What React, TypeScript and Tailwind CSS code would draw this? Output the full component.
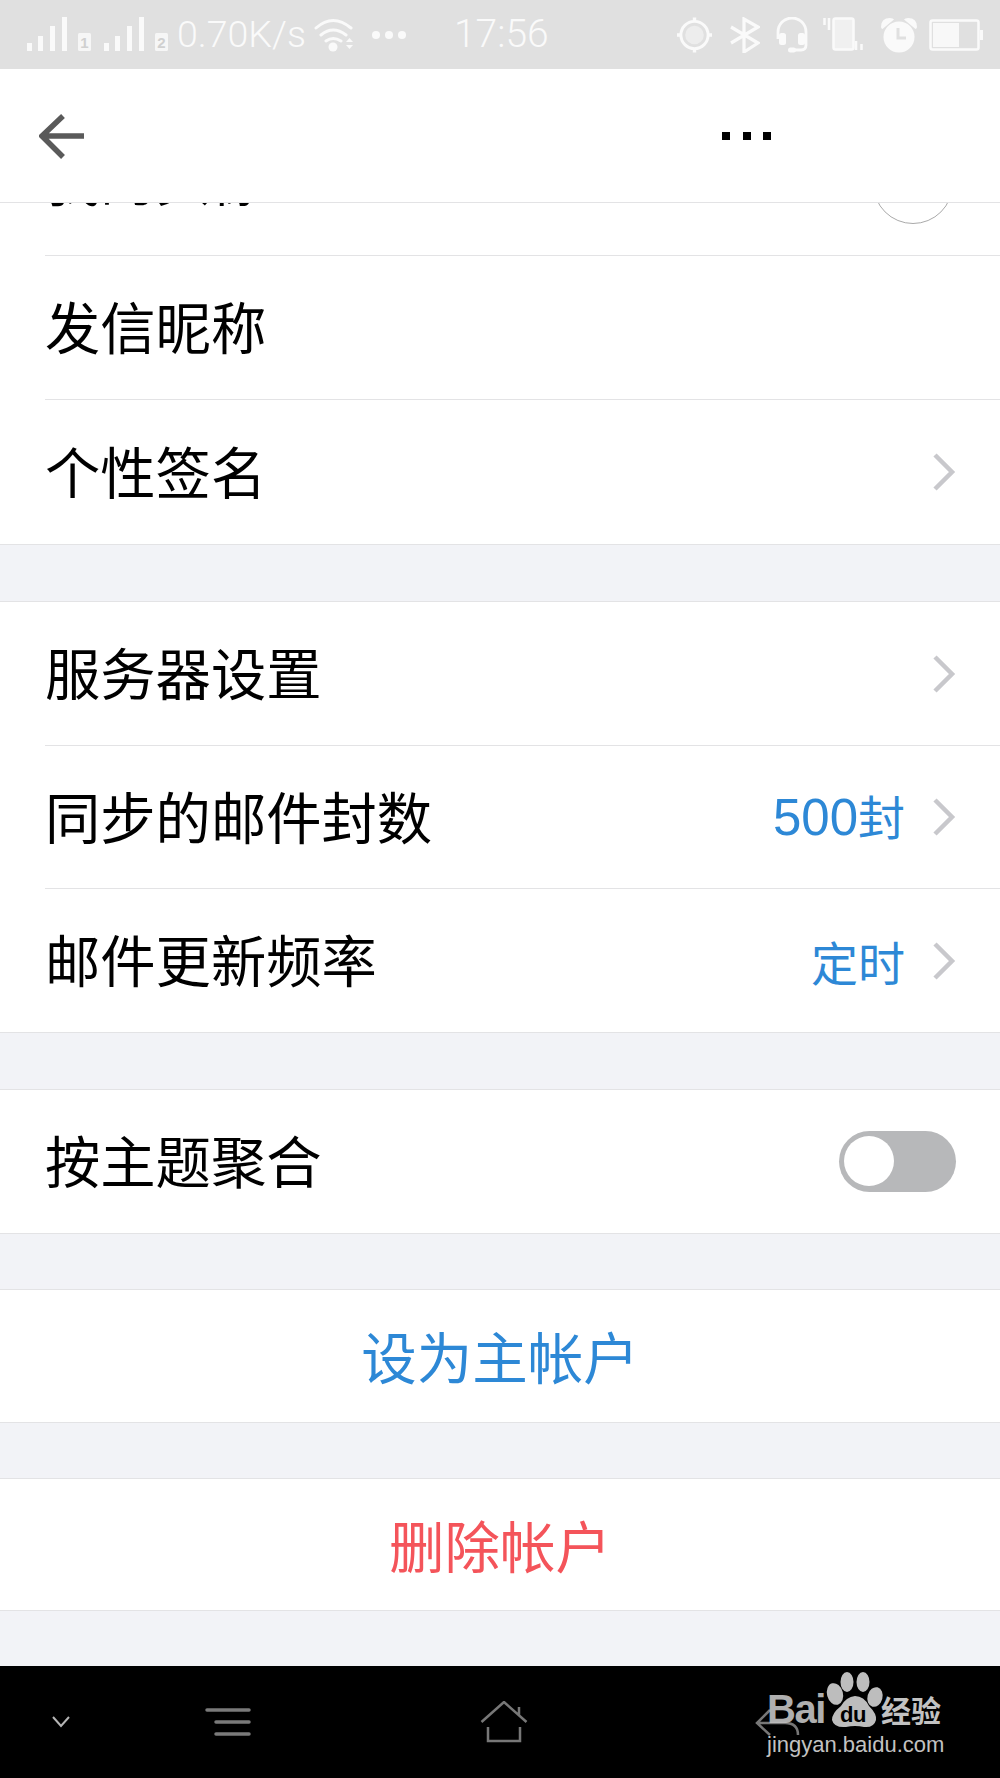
import React from "react";

const font = "font-['Noto_Sans_CJK_SC',sans-serif]";

function Chevron() {
  return (
    <svg width="24" height="38" viewBox="0 0 24 38" className="shrink-0">
      <path d="M3 2 L20 19 L3 36" fill="none" stroke="#c8c8cc" strokeWidth="4.5" />
    </svg>
  );
}

function Row({ label, value, digits, chevron, line, height }: { label: string; value?: string; digits?: string; chevron?: boolean; line?: boolean; height: string }) {
  return (
    <div className="pl-[45px] bg-white">
      <div className={`flex items-center pr-[44px] ${height} ${line ? "border-b border-[#e3e3e5]" : ""}`}>
        <span className="text-[55.3px] text-black leading-none flex-1 whitespace-nowrap pb-[3px]">{label}</span>
        {(value || digits) && (
          <span className="text-[47px] text-[#2d88d6] leading-none mr-[27px] whitespace-nowrap">
            {digits && <span className="text-[51px] font-['Liberation_Sans',sans-serif]">{digits}</span>}
            {value}
          </span>
        )}
        {chevron && <Chevron />}
      </div>
    </div>
  );
}

function ActionRow({ label, color, height }: { label: string; color: string; height: string }) {
  return (
    <div className={`border-y border-[#e3e3e5] bg-white flex items-center justify-center ${height}`}>
      <span className={`text-[55.5px] leading-none ${color}`}>{label}</span>
    </div>
  );
}

function Signal({ sim }: { sim: string }) {
  return (
    <svg width="66" height="36" viewBox="0 0 66 36" fill="#fafafa" className="shrink-0">
      <rect x="1" y="26" width="5" height="8" />
      <rect x="12" y="19" width="5" height="15" />
      <rect x="24" y="9" width="5" height="25" />
      <rect x="36" y="0" width="5" height="34" />
      <rect x="52" y="16" width="13" height="18" rx="1.5" fill="#f6f6f6" />
      <text x="58.500" y="31" textAnchor="middle" fontSize="15" fontWeight="700" fontFamily="Liberation Sans, sans-serif" fill="#d0d0d0">{sim}</text>
    </svg>
  );
}

function StatusIcons() {
  return (
    <div className="flex items-center ml-auto">
      <svg width="35" height="36" viewBox="0 0 36 36" fill="none" className="shrink-0">
        <circle cx="18" cy="18" r="14" stroke="#fafafa" strokeWidth="3" />
        <circle cx="18" cy="18" r="9.500" fill="#ededed" />
        <path d="M18 0v4M18 32v4M0 18h4M32 18h4" stroke="#fafafa" strokeWidth="3.500" />
      </svg>
      <svg width="30" height="36" viewBox="0 0 30 36" fill="none" className="ml-[18px] shrink-0">
        <path d="M1 10 L28 26 L14 35 V2 L28 10 L1 26" stroke="#fafafa" strokeWidth="3.200" />
      </svg>
      <svg width="32" height="36" viewBox="0 0 32 36" fill="none" className="ml-[16px] shrink-0">
        <path d="M2 22 V15 a14 14 0 0 1 28 0 V28 q0 5 -5 5 H14" stroke="#fafafa" strokeWidth="2.800" />
        <rect x="3" y="16" width="7" height="12" rx="2.500" fill="#fafafa" />
        <rect x="22" y="16" width="7" height="12" rx="2.500" fill="#fafafa" />
        <rect x="12" y="30.500" width="8" height="5" rx="2.500" fill="#fafafa" />
      </svg>
      <svg width="40" height="36" viewBox="0 0 40 36" fill="none" className="ml-[15px] shrink-0">
        <path d="M1.500 1v7M6 1v12" stroke="#fafafa" strokeWidth="2.500" />
        <rect x="10.500" y="1.500" width="20" height="31" rx="2" fill="#f0f0f0" stroke="#fafafa" strokeWidth="2.500" />
        <path d="M33 24v9M38.500 27v6" stroke="#fafafa" strokeWidth="2.500" />
      </svg>
      <svg width="38" height="36" viewBox="0 0 38 36" fill="none" className="ml-[17px] shrink-0">
        <circle cx="19" cy="20" r="15.500" fill="#fafafa" />
        <path d="M1 10 Q1 1 10 1 Q13 1 14 2.500 L2.500 12 Q1 11.500 1 10 Z M37 10 Q37 1 28 1 Q25 1 24 2.500 L35.500 12 Q37 11.500 37 10 Z" fill="#fafafa" />
        <path d="M18 11v10h8" stroke="#e0e0e0" strokeWidth="3" />
      </svg>
      <svg width="54" height="32" viewBox="0 0 54 32" fill="none" className="ml-[11px] shrink-0">
        <rect x="1.500" y="1.500" width="48" height="29" rx="2" stroke="#fafafa" strokeWidth="2.500" />
        <rect x="4" y="4" width="26" height="24" fill="#f8f8f8" />
        <rect x="51" y="11" width="3" height="10" fill="#fafafa" />
      </svg>
    </div>
  );
}

export default function App() {
  return (
    <div className={`relative w-[1000px] h-[1778px] overflow-hidden flex flex-col bg-[#f2f3f7] ${font}`}>
      {/* status bar */}
      <div className="h-[69px] shrink-0 bg-[#e0e0e0] flex items-center pl-[26px] pr-[17px] text-[#fafafa] font-['Roboto',sans-serif] font-light">
        <Signal sim="1" />
        <div className="w-[11px]" />
        <Signal sim="2" />
        <span className="text-[37.5px] leading-none ml-[8px] whitespace-nowrap">0.70K/s</span>
        <svg width="42" height="36" viewBox="0 0 42 36" fill="none" className="ml-[8px] shrink-0">
          <path d="M2 11 Q19 -4 37 11 M7 18 Q19 8 32 18 M12 24 Q19 19 27 24" stroke="#fafafa" strokeWidth="3" strokeLinecap="round" />
          <circle cx="19" cy="30" r="4.500" fill="#fafafa" />
          <path d="M32 25 l3.500 -4 l3.500 4 Z M32 28 l3.500 4 l3.500 -4 Z" fill="#fafafa" />
        </svg>
        <div className="flex gap-[5px] ml-[16px]">
          <span className="w-[8px] h-[8px] rounded-full bg-[#fafafa]" />
          <span className="w-[8px] h-[8px] rounded-full bg-[#fafafa]" />
          <span className="w-[8px] h-[8px] rounded-full bg-[#fafafa]" />
        </div>
        <span className="text-[39px] leading-none ml-[48px]">17:56</span>
        <StatusIcons />
      </div>

      {/* header */}
      <div className="relative z-10 h-[134px] shrink-0 bg-white border-b border-[#e3e3e5] flex items-center pl-[39px]">
        <svg width="48" height="48" viewBox="0 0 48 48" fill="none" className="shrink-0">
          <path d="M24 4 L3 24 L24 45 M3 24 H45" stroke="#5a5a5a" strokeWidth="5.500" />
        </svg>
        <div className="flex gap-[12.500px] ml-[635px]">
          <span className="w-[8px] h-[8px] bg-black" />
          <span className="w-[8px] h-[8px] bg-black" />
          <span className="w-[8px] h-[8px] bg-black" />
        </div>
      </div>

      {/* content */}
      <div className="flex-1 overflow-hidden">
        <div className="bg-white">
          <div className="-mt-[91px]">
            <div className="pl-[45px]">
              <div className="flex items-center justify-between pr-[47px] h-[144px] border-b border-[#e3e3e5]">
                <span className="text-[55.3px] text-black leading-none mb-[12px]">我的头像</span>
                <div className="w-[80px] h-[80px] rounded-full border border-[#aaaaaa]" />
              </div>
            </div>
            <Row label="发信昵称" height="h-[144px]" line />
            <Row label="个性签名" height="h-[144px]" chevron />
          </div>
        </div>
        <div className="border-t border-[#e3e3e5] h-[57px]" />
        <div className="border-y border-[#e3e3e5] bg-white">
          <Row label="服务器设置" height="h-[144px]" chevron line />
          <Row label="同步的邮件封数" digits="500" value="封" height="h-[143px]" chevron line />
          <Row label="邮件更新频率" value="定时" height="h-[143px]" chevron />
        </div>
        <div className="h-[56px]" />
        <div className="border-y border-[#e3e3e5] bg-white">
          <div className="pl-[45px] pr-[44px] h-[143px] flex items-center">
            <span className="text-[55.3px] text-black leading-none flex-1 pb-[3px]">按主题聚合</span>
            <div className="w-[117px] h-[61px] rounded-full bg-[#b7b8ba] p-[5px]">
              <div className="w-[50px] h-[50px] rounded-full bg-white" />
            </div>
          </div>
        </div>
        <div className="h-[55px]" />
        <ActionRow label="设为主帐户" color="text-[#2d88d6]" height="h-[134px]" />
        <div className="h-[55px]" />
        <ActionRow label="删除帐户" color="text-[#f4545a]" height="h-[133px]" />
      </div>

      {/* nav bar */}
      <div className="h-[112px] shrink-0 bg-black flex items-center relative">
        <svg width="20" height="12" viewBox="0 0 20 12" fill="none" className="ml-[51px] shrink-0">
          <path d="M2 1 L10 10 L18 1" stroke="#b5b5b5" strokeWidth="2" />
        </svg>
        <svg width="46" height="30" viewBox="0 0 46 30" fill="none" className="ml-[134px] shrink-0">
          <path d="M2 3 H44 M11 15 H44 M11 27 H44" stroke="#7a7a7a" strokeWidth="3.500" strokeLinecap="round" />
        </svg>
        <svg width="48" height="42" viewBox="0 0 48 42" fill="none" className="ml-[229px] shrink-0">
          <path d="M1.500 21 L24 1 L46.500 21 M39 6 V15 M8 26 V40 H40 V26" stroke="#777" strokeWidth="2.500" />
        </svg>
      </div>

      {/* watermark */}
      <div className="absolute left-[750px] top-[1670px] w-[200px] h-[100px] text-[#c2c2c2] font-['Liberation_Sans',sans-serif]">
        <svg width="200" height="100" viewBox="0 0 200 100" className="absolute left-0 top-0">
          <g fill="#bdbdbd">
            <ellipse cx="85" cy="24" rx="8" ry="11" transform="rotate(-15 85 24)" />
            <ellipse cx="97" cy="12" rx="6.500" ry="10" />
            <ellipse cx="113" cy="12" rx="6.500" ry="10" />
            <ellipse cx="125" cy="27" rx="7.500" ry="10" transform="rotate(15 125 27)" />
            <path d="M105 26 Q114 26 119 36 Q127 44 126 50 Q124 58 114 57 Q105 55 96 57 Q84 58 82 50 Q82 43 91 36 Q96 27 105 26 Z" />
          </g>
          <path d="M20 40 L7 53 L20 65 M7 53 H35 Q48 53 48 65" fill="none" stroke="#777" strokeWidth="2.500" />
        </svg>
        <span className="absolute left-[17px] top-[19px] text-[40px] font-bold leading-none tracking-[-1.500px] opacity-90 whitespace-nowrap">Bai</span>
        <span className="absolute left-[90px] top-[34px] text-[22px] font-bold leading-none tracking-[-0.500px] text-black whitespace-nowrap">du</span>
        <span className={`absolute left-[131px] top-[24px] text-[30px] font-bold leading-none whitespace-nowrap ${font}`}>经验</span>
        <span className="absolute left-[17px] top-[64px] text-[22px] leading-none whitespace-nowrap">jingyan.baidu.com</span>
      </div>
    </div>
  );
}
